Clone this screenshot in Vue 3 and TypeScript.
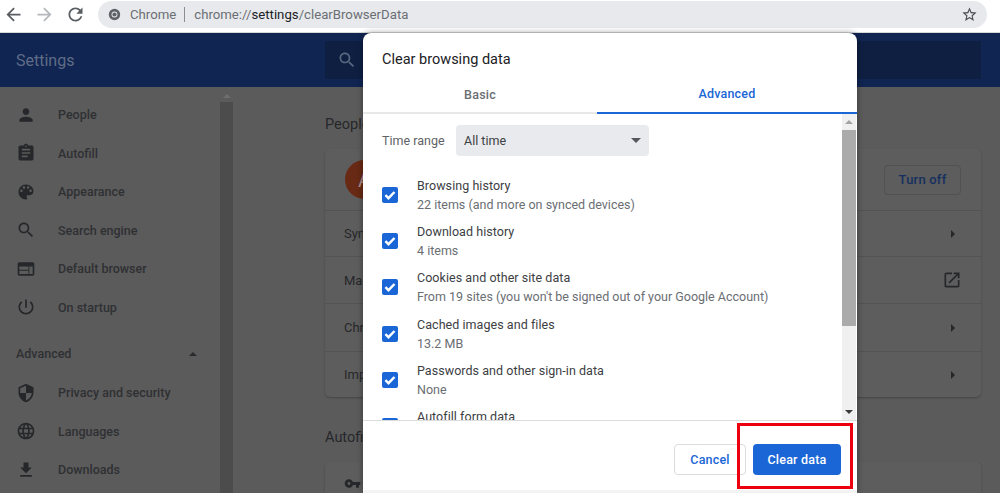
<script setup lang="ts">
const icons: Record<string, string> = {
  person: 'M12 12c2.21 0 4-1.79 4-4s-1.79-4-4-4-4 1.79-4 4 1.79 4 4 4zm0 2c-2.67 0-8 1.34-8 4v2h16v-2c0-2.66-5.33-4-8-4z',
  assignment: 'M19 3h-4.18C14.4 1.84 13.3 1 12 1c-1.3 0-2.4.84-2.82 2H5c-1.1 0-2 .9-2 2v14c0 1.1.9 2 2 2h14c1.1 0 2-.9 2-2V5c0-1.1-.9-2-2-2zm-7 0c.55 0 1 .45 1 1s-.45 1-1 1-1-.45-1-1 .45-1 1-1zm2 14H7v-2h7v2zm3-4H7v-2h10v2zm0-4H7V7h10v2z',
  palette: 'M12 3c-4.97 0-9 4.03-9 9s4.03 9 9 9c.83 0 1.5-.67 1.5-1.5 0-.39-.15-.74-.39-1.01-.23-.26-.38-.61-.38-.99 0-.83.67-1.5 1.5-1.5H16c2.76 0 5-2.24 5-5 0-4.42-4.03-8-9-8zm-5.5 9c-.83 0-1.5-.67-1.5-1.5S5.67 9 6.5 9 8 9.67 8 10.5 7.33 12 6.5 12zm3-4C8.67 8 8 7.33 8 6.5S8.67 5 9.5 5s1.5.67 1.5 1.5S10.33 8 9.5 8zm5 0c-.83 0-1.5-.67-1.5-1.5S13.67 5 14.5 5s1.5.67 1.5 1.5S15.33 8 14.5 8zm3 4c-.83 0-1.5-.67-1.5-1.5S16.67 9 17.5 9s1.5.67 1.5 1.5-.67 1.5-1.5 1.5z',
  search: 'M15.5 14h-.79l-.28-.27C15.41 12.59 16 11.11 16 9.5 16 5.91 13.09 3 9.5 3S3 5.91 3 9.5 5.91 16 9.5 16c1.61 0 3.09-.59 4.23-1.57l.27.28v.79l5 4.99L20.49 19l-4.99-5zm-6 0C7.01 14 5 11.99 5 9.5S7.01 5 9.5 5 14 7.01 14 9.5 11.99 14 9.5 14z',
  web: 'M20 4H4c-1.1 0-1.99.9-1.99 2L2 18c0 1.1.9 2 2 2h16c1.1 0 2-.9 2-2V6c0-1.1-.9-2-2-2zm-5 14H4v-4h11v4zm0-5H4V9h11v4zm5 5h-4V9h4v9z',
  power: 'M13 3h-2v10h2V3zm4.83 2.17l-1.42 1.42C17.99 7.86 19 9.81 19 12c0 3.87-3.13 7-7 7s-7-3.13-7-7c0-2.19 1.01-4.14 2.58-5.42L6.17 5.17C4.23 6.82 3 9.26 3 12c0 4.97 4.03 9 9 9s9-4.03 9-9c0-2.74-1.23-5.18-3.17-6.83z',
  security: 'M12 1L3 5v6c0 5.55 3.84 10.74 9 12 5.16-1.26 9-6.45 9-12V5l-9-4zm0 10.99h7c-.53 4.12-3.28 7.79-7 8.94V12H5V6.3l7-3.11v8.8z',
  language: 'M11.99 2C6.47 2 2 6.48 2 12s4.47 10 9.99 10C17.52 22 22 17.52 22 12S17.52 2 11.99 2zm6.93 6h-2.95c-.32-1.25-.78-2.45-1.38-3.56 1.84.63 3.37 1.91 4.33 3.56zM12 4.04c.83 1.2 1.48 2.53 1.91 3.96h-3.82c.43-1.43 1.08-2.76 1.91-3.96zM4.26 14C4.1 13.36 4 12.69 4 12s.1-1.36.26-2h3.38c-.08.66-.14 1.32-.14 2 0 .68.06 1.34.14 2H4.26zm.82 2h2.95c.32 1.25.78 2.45 1.38 3.56-1.84-.63-3.37-1.9-4.33-3.56zm2.95-8H5.08c.96-1.66 2.49-2.93 4.33-3.56C8.81 5.55 8.35 6.75 8.03 8zM12 19.96c-.83-1.2-1.48-2.53-1.91-3.96h3.82c-.43 1.43-1.08 2.76-1.91 3.96zM14.34 14H9.66c-.09-.66-.16-1.32-.16-2 0-.68.07-1.35.16-2h4.68c.09.65.16 1.32.16 2 0 .68-.07 1.34-.16 2zm.25 5.56c.6-1.11 1.06-2.31 1.38-3.56h2.95c-.96 1.65-2.49 2.93-4.33 3.56zM16.36 14c.08-.66.14-1.32.14-2 0-.68-.06-1.34-.14-2h3.38c.16.64.26 1.31.26 2s-.1 1.36-.26 2h-3.38z',
  download: 'M19 9h-4V3H9v6H5l7 7 7-7zM5 18v2h14v-2H5z',
  openNew: 'M19 19H5V5h7V3H5c-1.11 0-2 .9-2 2v14c0 1.1.89 2 2 2h14c1.1 0 2-.9 2-2v-7h-2v7zM14 3v2h3.59l-9.83 9.83 1.41 1.41L19 6.41V10h2V3h-7z',
  key: 'M12.65 10C11.83 7.67 9.61 6 7 6c-3.31 0-6 2.69-6 6s2.69 6 6 6c2.61 0 4.83-1.67 5.65-4H17v4h4v-4h2v-4H12.65zM7 14c-1.1 0-2-.9-2-2s.9-2 2-2 2 .9 2 2-.9 2-2 2z',
  star: 'M22 9.24l-7.19-.62L12 2 9.19 8.63 2 9.24l5.46 4.73L5.82 21 12 17.27 18.18 21l-1.63-7.03L22 9.24zM12 15.4l-3.76 2.27 1-4.28-3.32-2.88 4.38-.38L12 6.1l1.71 4.04 4.38.38-3.32 2.88 1 4.28L12 15.4z',
  back: 'M20 11H7.83l5.59-5.59L12 4l-8 8 8 8 1.41-1.41L7.83 13H20v-2z',
  forward: 'M12 4l-1.41 1.41L16.17 11H4v2h12.17l-5.58 5.59L12 20l8-8z',
  refresh: 'M17.65 6.35C16.2 4.9 14.21 4 12 4c-4.42 0-7.99 3.58-7.99 8s3.57 8 7.99 8c3.73 0 6.84-2.55 7.73-6h-2.08c-.82 2.33-3.04 4-5.65 4-3.31 0-6-2.69-6-6s2.69-6 6-6c1.66 0 3.14.69 4.22 1.78L13 11h7V4l-2.35 2.35z'
}

const menuTop = [
  { label: 'People', icon: 'person' },
  { label: 'Autofill', icon: 'assignment' },
  { label: 'Appearance', icon: 'palette' },
  { label: 'Search engine', icon: 'search' },
  { label: 'Default browser', icon: 'web' },
  { label: 'On startup', icon: 'power' }
]

const menuAdvanced = [
  { label: 'Privacy and security', icon: 'security' },
  { label: 'Languages', icon: 'language' },
  { label: 'Downloads', icon: 'download' }
]

// only the start of each label shows, the dialog covers the rest
const peopleRows = [
  { label: 'Sync', open: false, height: 46 },
  { label: 'Manage', open: true, height: 47 },
  { label: 'Chrome', open: false, height: 48 },
  { label: 'Import', open: false, height: 46 }
]

const clearItems = [
  { title: 'Browsing history', sub: '22 items (and more on synced devices)' },
  { title: 'Download history', sub: '4 items' },
  { title: 'Cookies and other site data', sub: "From 19 sites (you won't be signed out of your Google Account)" },
  { title: 'Cached images and files', sub: '13.2 MB' },
  { title: 'Passwords and other sign-in data', sub: 'None' },
  { title: 'Autofill form data', sub: '' }
]
</script>

<template>
  <div class="page">
    <!-- browser toolbar -->
    <div class="toolbar">
      <svg class="nav-icon" viewBox="0 0 24 24"><path :d="icons.back" /></svg>
      <svg class="nav-icon nav-off" viewBox="0 0 24 24"><path :d="icons.forward" /></svg>
      <svg class="nav-icon" viewBox="0 0 24 24"><path :d="icons.refresh" /></svg>
      <div class="omnibox">
        <svg class="chrome-logo" viewBox="0 0 16 16">
          <circle cx="8" cy="8" r="7" fill="#5f6368" />
          <circle cx="8" cy="8" r="3.6" fill="#e8eaed" />
          <circle cx="8" cy="8" r="2.6" fill="#5f6368" />
        </svg>
        <span class="site">Chrome</span>
        <span class="sep"></span>
        <span class="url">chrome://<b>settings</b>/clearBrowserData</span>
        <svg class="star" viewBox="0 0 24 24"><path :d="icons.star" /></svg>
      </div>
    </div>

    <!-- settings page, dimmed behind the dialog -->
    <div class="settings-header">
      <span class="settings-title">Settings</span>
      <div class="search-box">
        <svg viewBox="0 0 24 24"><path :d="icons.search" /></svg>
      </div>
    </div>

    <div class="settings-body">
      <nav class="sidebar">
        <div v-for="item in menuTop" :key="item.label" class="menu-item">
          <svg viewBox="0 0 24 24"><path :d="icons[item.icon]" /></svg>
          <span>{{ item.label }}</span>
        </div>
        <div class="menu-section">
          <span>Advanced</span>
          <i class="caret-up"></i>
        </div>
        <div v-for="item in menuAdvanced" :key="item.label" class="menu-item">
          <svg viewBox="0 0 24 24"><path :d="icons[item.icon]" /></svg>
          <span>{{ item.label }}</span>
        </div>
      </nav>

      <div class="side-scroll">
        <i class="side-arrow"></i>
        <div class="side-thumb"></div>
      </div>

      <main class="content">
        <h2 class="section-title">People</h2>
        <div class="card">
          <div class="account-row">
            <div class="avatar">A</div>
            <button class="turn-off">Turn off</button>
          </div>
          <div
            v-for="row in peopleRows"
            :key="row.label"
            class="card-row"
            :style="{ height: row.height + 'px' }"
          >
            <span>{{ row.label }}</span>
            <svg v-if="row.open" class="open-icon" viewBox="0 0 24 24"><path :d="icons.openNew" /></svg>
            <i v-else class="caret-right"></i>
          </div>
        </div>
        <h2 class="section-title autofill-title">Autofill</h2>
        <div class="card card-cut">
          <div class="card-row">
            <svg class="key-icon" viewBox="0 0 24 24"><path :d="icons.key" /></svg>
          </div>
        </div>
      </main>
    </div>

    <!-- modal -->
    <div class="dialog">
      <div class="dialog-title">Clear browsing data</div>
      <div class="tabs">
        <div class="tab">Basic</div>
        <div class="tab tab-active">Advanced</div>
      </div>

      <div class="dialog-body">
        <div class="dialog-scroll">
          <div class="time-range">
            <span class="time-label">Time range</span>
            <div class="select">
              <span>All time</span>
              <i class="select-caret"></i>
            </div>
          </div>
          <div v-for="item in clearItems" :key="item.title" class="check-row">
            <span class="checkbox">
              <svg viewBox="0 0 16 16"><path d="M3.4 8.2l3.1 3 6-6.2" /></svg>
            </span>
            <div class="check-text">
              <div class="check-title">{{ item.title }}</div>
              <div class="check-sub">{{ item.sub }}</div>
            </div>
          </div>
        </div>
        <div class="scrollbar">
          <i class="scroll-up"></i>
          <div class="scroll-thumb"></div>
          <i class="scroll-down"></i>
        </div>
      </div>

      <div class="dialog-footer">
        <button class="btn-cancel">Cancel</button>
        <button class="btn-clear">Clear data</button>
      </div>
    </div>

    <!-- red annotation round the button -->
    <div class="annotation"></div>
  </div>
</template>

<style>
html,
body {
  margin: 0;
  background: #fff;
}
</style>

<style scoped>
.page {
  position: relative;
  width: 1000px;
  height: 493px;
  overflow: hidden;
  font-family: Roboto, 'Liberation Sans', sans-serif;
  background: #5b5b5b;
}

.toolbar {
  display: flex;
  align-items: center;
  box-sizing: border-box;
  height: 33px;
  padding: 0 13px 4px 3px;
  background: #fff;
  border-bottom: 1px solid #d8d8d8;
}

.nav-icon {
  width: 21px;
  height: 21px;
  margin-right: 10px;
  fill: #5a5d61;
}

.nav-off {
  fill: #b4b7bb;
}

.omnibox {
  display: flex;
  align-items: center;
  flex: 1;
  height: 27px;
  margin-left: 2px;
  padding: 0 9px 0 10px;
  border-radius: 14px;
  background: #e7e9ec;
  font-size: 13.2px;
  color: #6b6f74;
}

.chrome-logo {
  width: 13px;
  height: 13px;
  margin-right: 9px;
}

.sep {
  width: 1px;
  height: 15px;
  margin: 0 9px 0 8px;
  background: #8a8d91;
}

.url {
  flex: 1;
}

.url b {
  font-weight: 400;
  color: #202124;
}

.star {
  width: 17px;
  height: 17px;
  fill: #4a4d51;
}

.settings-header {
  display: flex;
  align-items: center;
  height: 54px;
  background: #102552;
}

.settings-title {
  width: 325px;
  box-sizing: border-box;
  padding-left: 16px;
  font-size: 16px;
  color: #5f6c86;
}

.search-box {
  display: flex;
  align-items: center;
  width: 656px;
  height: 38px;
  padding-left: 12px;
  box-sizing: border-box;
  background: #0e1f42;
}

.search-box svg {
  width: 20px;
  height: 20px;
  fill: #59667f;
}

.settings-body {
  display: flex;
  height: 406px;
}

.sidebar {
  box-sizing: border-box;
  width: 220px;
  padding-top: 8.5px;
  color: #2f3033;
}

.menu-item {
  display: flex;
  align-items: center;
  height: 38.5px;
  padding-left: 16px;
  font-size: 12.5px;
  font-weight: 500;
}

.menu-item svg {
  width: 20px;
  height: 20px;
  margin-right: 22px;
  fill: #26272a;
}

.menu-section {
  display: flex;
  align-items: center;
  justify-content: space-between;
  height: 40px;
  margin-top: 7px;
  padding: 0 23px 0 16px;
  font-size: 12.5px;
  font-weight: 500;
}

.caret-up {
  width: 0;
  height: 0;
  border-left: 4px solid transparent;
  border-right: 4px solid transparent;
  border-bottom: 4px solid #2a2b2e;
}

.side-scroll {
  display: flex;
  flex-direction: column;
  align-items: center;
  width: 13px;
}

.side-arrow {
  width: 0;
  height: 0;
  margin: 7px 0 4px;
  border-left: 4px solid transparent;
  border-right: 4px solid transparent;
  border-bottom: 4px solid #6e6e6e;
}

.side-thumb {
  flex: 1;
  width: 13px;
  background: #4c4c4c;
}

.content {
  flex: 1;
  padding: 28px 19px 0 92px;
  min-width: 0;
}

.section-title {
  margin: 0;
  height: 19px;
  font-size: 14.5px;
  line-height: 19px;
  font-weight: 400;
  color: #26272a;
}

.card {
  box-sizing: border-box;
  margin-top: 15px;
  border-radius: 5px;
  background: #5d5d5d;
  box-shadow: 0 1px 2px rgba(0, 0, 0, 0.25);
}

.account-row {
  display: flex;
  align-items: center;
  justify-content: space-between;
  height: 61px;
  padding: 0 20px;
}

.avatar {
  display: flex;
  align-items: center;
  justify-content: center;
  width: 39px;
  height: 39px;
  border-radius: 50%;
  background: #682a14;
  color: #a88;
  font-size: 20px;
}

.turn-off {
  width: 77px;
  height: 30px;
  padding: 0;
  border: 1px solid #515151;
  border-radius: 4px;
  background: transparent;
  color: #15305f;
  font-family: inherit;
  font-size: 13px;
  font-weight: 500;
  letter-spacing: 0.2px;
}

.card-row {
  display: flex;
  align-items: center;
  justify-content: space-between;
  box-sizing: border-box;
  padding: 0 26px 0 19px;
  border-top: 1px solid #535353;
  font-size: 13px;
  color: #26272a;
}

.caret-right {
  width: 0;
  height: 0;
  border-top: 4px solid transparent;
  border-bottom: 4px solid transparent;
  border-left: 4px solid #26272a;
}

.open-icon {
  width: 20px;
  height: 20px;
  margin-right: -7px;
  fill: #26272a;
}

.autofill-title {
  margin-top: 31px;
}

.card-cut {
  height: 50px;
}

.card-cut .card-row {
  height: 42px;
  border-top: 0;
}

.key-icon {
  width: 17px;
  height: 17px;
  fill: #26272a;
}

.dialog {
  position: absolute;
  left: 363px;
  top: 33px;
  display: flex;
  flex-direction: column;
  width: 494px;
  height: 460px;
  border-radius: 8px 8px 0 0;
  background: #fff;
  box-shadow: 0 0 6px rgba(0, 0, 0, 0.4);
  overflow: hidden;
}

.dialog-title {
  height: 42px;
  padding: 18px 0 0 19px;
  box-sizing: border-box;
  font-size: 14.5px;
  line-height: 18px;
  color: #202124;
}

.tabs {
  display: flex;
  height: 39px;
  box-sizing: border-box;
  border-bottom: 2px solid #e8e8e8;
  font-size: 12.5px;
  font-weight: 500;
  letter-spacing: 0.2px;
}

.tab {
  display: flex;
  align-items: center;
  justify-content: center;
  width: 234px;
  height: 39px;
  box-sizing: border-box;
  color: #6a6e73;
}

.tab-active {
  width: 260px;
  border-bottom: 2px solid #1a66d6;
  color: #1a66d6;
}

.dialog-body {
  display: flex;
  height: 306px;
  border-bottom: 1px solid #dcdcdc;
}

.dialog-scroll {
  flex: 1;
  min-width: 0;
  overflow: hidden;
  padding: 11px 0 0 19px;
}

.time-range {
  display: flex;
  align-items: center;
  height: 31px;
  margin-bottom: 15.5px;
}

.time-label {
  width: 74px;
  font-size: 12.5px;
  color: #5f6368;
}

.select {
  display: flex;
  align-items: center;
  justify-content: space-between;
  box-sizing: border-box;
  width: 193px;
  height: 31px;
  padding: 0 8px;
  border-radius: 4px;
  background: #e8eaed;
  font-size: 12.5px;
  color: #3c4043;
}

.select-caret {
  width: 0;
  height: 0;
  margin-top: -1px;
  border-left: 5px solid transparent;
  border-right: 5px solid transparent;
  border-top: 5px solid #54575b;
}

.check-row {
  display: flex;
  align-items: center;
  height: 46.3px;
}

.checkbox {
  display: flex;
  width: 16px;
  height: 16px;
  flex: none;
  margin-right: 19px;
  border-radius: 2px;
  background: #1a66d6;
}

.checkbox svg {
  width: 16px;
  height: 16px;
  fill: none;
  stroke: #fff;
  stroke-width: 2.4;
}

.check-title {
  height: 19px;
  font-size: 12.5px;
  line-height: 19px;
  letter-spacing: 0.05px;
  color: #3c4043;
}

.check-sub {
  height: 19px;
  font-size: 12.5px;
  line-height: 19px;
  color: #6a6e73;
  white-space: nowrap;
}

.scrollbar {
  display: flex;
  flex-direction: column;
  align-items: center;
  flex: none;
  width: 14px;
  margin-right: 1px;
  background: #f0f0f0;
}

.scroll-up {
  width: 0;
  height: 0;
  margin: 6px 0;
  border-left: 4px solid transparent;
  border-right: 4px solid transparent;
  border-bottom: 4px solid #a3a3a3;
}

.scroll-thumb {
  width: 14px;
  height: 196px;
  background: #ababab;
}

.scroll-down {
  width: 0;
  height: 0;
  margin-top: auto;
  margin-bottom: 6px;
  border-left: 4px solid transparent;
  border-right: 4px solid transparent;
  border-top: 4px solid #3c3c3c;
}

.dialog-footer {
  display: flex;
  justify-content: flex-end;
  gap: 7px;
  box-sizing: border-box;
  height: 69px;
  padding: 23px 16px 0 0;
  background: #fff;
  box-shadow: 0 3px 0 #f3f3f3;
}

.dialog-footer button {
  box-sizing: border-box;
  height: 31px;
  padding: 0;
  border-radius: 4px;
  font-family: inherit;
  font-size: 12.5px;
  font-weight: 500;
  letter-spacing: 0.2px;
}

.btn-cancel {
  width: 72px;
  border: 1px solid #dadce0;
  background: #fff;
  color: #1a66d6;
}

.btn-clear {
  width: 88px;
  border: 0;
  background: #1a66d6;
  color: #fff;
}

.annotation {
  position: absolute;
  left: 737px;
  top: 423px;
  width: 110px;
  height: 60px;
  border: 3px solid #ec0010;
  pointer-events: none;
}
</style>
